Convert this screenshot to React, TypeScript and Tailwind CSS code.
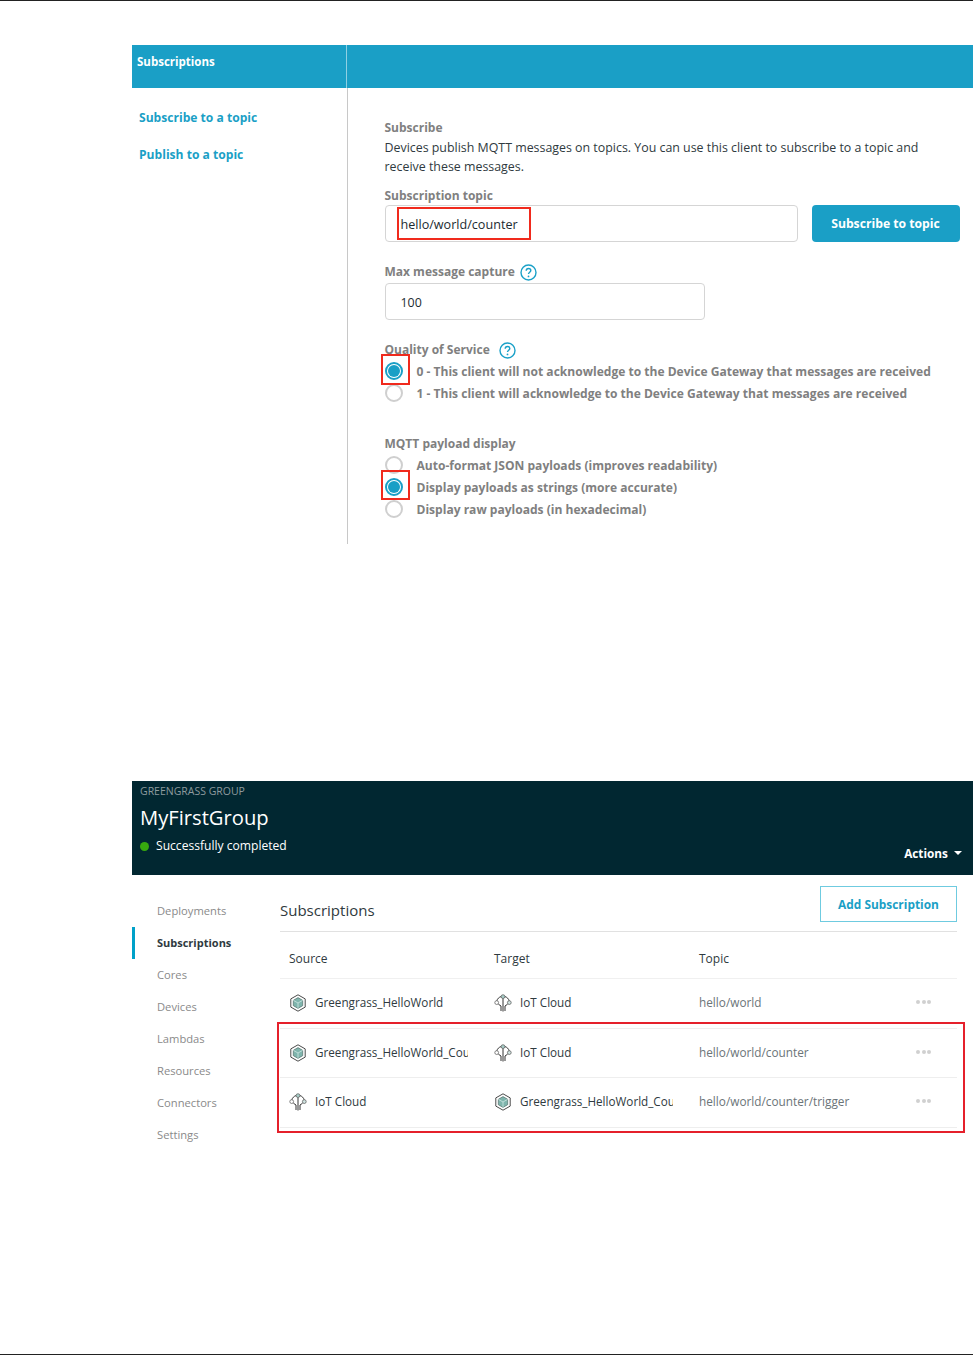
const font = { fontFamily: '"Open Sans", "Noto Sans", sans-serif' };

function HelpIcon() {
  return (
    <svg width="17" height="17" viewBox="0 0 17 17" className="shrink-0 text-[#1ba1c8]">
      <circle cx="8.5" cy="8.5" r="7.5" fill="none" stroke="currentColor" strokeWidth="1.4" />
      <path d="M6.2 6.7c0-1.4 1-2.2 2.3-2.2s2.3.8 2.3 2c0 1.8-2.3 1.8-2.3 3.6" fill="none" stroke="currentColor" strokeWidth="1.4" />
      <circle cx="8.5" cy="12.4" r="0.9" fill="currentColor" />
    </svg>
  );
}

function Radio({ checked, label }: { checked?: boolean; label: string }) {
  return (
    <div className="flex h-[22px] items-center">
      <span className={`-mt-[1px] flex h-[18px] w-[18px] shrink-0 items-center justify-center rounded-full border-2 bg-white ${checked ? 'border-[#1a9fc6]' : 'border-[#cfcfcf]'}`}>
        {checked && <span className="h-3 w-3 rounded-full bg-[#1a9fc6]" />}
      </span>
      <span className="ml-[14px] whitespace-nowrap pt-[2px] text-[12.05px] font-bold text-[#808080]">{label}</span>
    </div>
  );
}

function CoreIcon() {
  return (
    <svg width="18" height="18" viewBox="0 0 18 18" className="shrink-0">
      <path d="M9 .8l7.2 4.1v8.2L9 17.2l-7.2-4.1V4.9z" fill="#fff" stroke="#4a4a4a" strokeWidth="1" />
      <path d="M9 3.6l4.7 2.7v5.4L9 14.4l-4.7-2.7V6.3z" fill="#7fb5ad" stroke="#55706c" strokeWidth="0.7" />
      <path d="M4.3 6.3L9 9l4.7-2.7M9 9v5.4" fill="none" stroke="#d9ece9" strokeWidth="0.7" />
    </svg>
  );
}

function CloudIcon() {
  return (
    <svg width="18" height="18" viewBox="0 0 18 18" className="shrink-0">
      <path d="M7 2.6C5 3.2 3.4 4.8 2.8 6.8M11 2.6c2 .6 3.6 2.2 4.2 4.2" fill="none" stroke="#333" strokeWidth="1" />
      <path d="M7 17v-5L4.4 10.2M9 17.5V4.4M11 17v-5l2.6-1.8" fill="none" stroke="#333" strokeWidth="1" />
      <circle cx="9" cy="2.6" r="1.9" fill="#a9cfc9" stroke="#555" strokeWidth="0.7" />
      <circle cx="2.7" cy="8.6" r="1.9" fill="#fff" stroke="#555" strokeWidth="0.7" />
      <circle cx="15.3" cy="8.6" r="1.9" fill="#cfe3e0" stroke="#555" strokeWidth="0.7" />
    </svg>
  );
}

function Endpoint({ kind, name }: { kind: 'core' | 'cloud'; name: string }) {
  return (
    <div className="flex w-[205px] items-center pl-[9px]">
      {kind === 'core' ? <CoreIcon /> : <CloudIcon />}
      <span className="ml-[8px] w-[153px] overflow-hidden whitespace-nowrap text-[11.7px] text-[#2f3a40]">{name}</span>
    </div>
  );
}

function Row({ source, target, topic }: { source: ['core' | 'cloud', string]; target: ['core' | 'cloud', string]; topic: string }) {
  return (
    <div className="flex h-[49.5px] items-center border-b border-[#eeeeee]">
      <Endpoint kind={source[0]} name={source[1]} />
      <Endpoint kind={target[0]} name={target[1]} />
      <span className="ml-[9px] w-[217px] text-[11.8px] text-[#6b7478]">{topic}</span>
      <span className="-mt-[2px] flex gap-[1.5px]">
        <i className="h-1 w-1 rounded-full bg-[#d0d0d0]" />
        <i className="h-1 w-1 rounded-full bg-[#d0d0d0]" />
        <i className="h-1 w-1 rounded-full bg-[#d0d0d0]" />
      </span>
    </div>
  );
}

const groupNav = ['Deployments', 'Subscriptions', 'Cores', 'Devices', 'Lambdas', 'Resources', 'Connectors', 'Settings'];

export default function App() {
  return (
    <div style={font} className="flex h-[1355px] flex-col border-y border-[#222] bg-white pl-[132px]">
      {/* MQTT client panel */}
      <div className="mt-[44px] flex h-[43px] bg-[#1a9fc6]">
        <div className="w-[215px] border-r border-[#8fd0e3] pl-[5px] pt-[8px] text-[11.5px] font-bold text-white">Subscriptions</div>
      </div>
      <div className="flex h-[456px]">
        <div className="w-[216px] border-r border-[#c8c8c8] pl-[7px] pt-[20px] text-[12.1px] font-bold text-[#1a9fc6]">
          <p className="leading-5">Subscribe to a topic</p>
          <p className="mt-[17px] leading-5">Publish to a topic</p>
        </div>
        <div className="pl-[36.5px] pt-[31px] text-[12.4px]">
          <p className="h-[18px] text-[12px] font-bold leading-[18px] text-[#808080]">Subscribe</p>
          <p className="mt-[1px] w-[560px] leading-[19px] text-[#2f3a40]">
            Devices publish MQTT messages on topics. You can use this client to subscribe to a topic and receive these messages.
          </p>
          <p className="mt-[11px] text-[12px] font-bold leading-[18px] text-[#808080]">Subscription topic</p>
          <div className="flex">
            <div className="relative flex h-[37px] w-[413px] items-center rounded border border-[#d5d5d5] pl-[15px] pt-[3px] text-[12.6px] text-[#1c2b31]">
              hello/world/counter
              <span className="absolute left-[11px] top-[1px] h-[33px] w-[134px] border-2 border-[#f02a1d]" />
            </div>
            <div className="ml-[14px] flex h-[37px] w-[148px] items-center justify-center rounded bg-[#1a9fc6] pt-[1px] text-[12.2px] font-bold text-white">
              Subscribe to topic
            </div>
          </div>
          <div className="mt-[20px] flex h-[20px] items-center gap-[5px] text-[12px] font-bold text-[#808080]">
            Max message capture <HelpIcon />
          </div>
          <div className="mt-[1px] flex h-[37px] w-[320px] items-center rounded border border-[#d5d5d5] pl-[15px] pt-[3px] text-[#1c2b31]">100</div>
          <div className="mt-[20px] flex h-[20px] items-center gap-[9px] text-[12px] font-bold text-[#808080]">
            Quality of Service <HelpIcon />
          </div>
          <div className="relative">
            <Radio checked label="0 - This client will not acknowledge to the Device Gateway that messages are received" />
            <Radio label="1 - This client will acknowledge to the Device Gateway that messages are received" />
            <span className="absolute -left-[4px] -top-[6px] h-[31px] w-[29px] border-2 border-[#f02a1d]" />
          </div>
          <p className="mt-[30px] h-[20px] text-[12px] font-bold leading-[20px] text-[#808080]">MQTT payload display</p>
          <div className="relative">
            <Radio label="Auto-format JSON payloads (improves readability)" />
            <Radio checked label="Display payloads as strings (more accurate)" />
            <Radio label="Display raw payloads (in hexadecimal)" />
            <span className="absolute -left-[4px] top-[16px] h-[30px] w-[29px] border-2 border-[#f02a1d]" />
          </div>
        </div>
      </div>

      {/* Greengrass group panel */}
      <div className="mt-[237px] flex h-[94px] items-end justify-between bg-[#012731] pb-[13px] pl-[8px] pr-[11px]">
        <div className="self-start">
          <p className="mt-[3px] text-[10.5px] leading-[14px] text-[#8d9a9e]">GREENGRASS GROUP</p>
          <p className="mt-[4px] text-[20.2px] leading-[30px] text-white">MyFirstGroup</p>
          <div className="mt-[5px] flex items-center text-[12.1px] leading-[18px] text-white">
            <span className="mr-[7px] h-[9px] w-[9px] rounded-full bg-[#37a80f]" />
            Successfully completed
          </div>
        </div>
        <div className="flex items-center gap-[6px] text-[11.8px] font-bold leading-[18px] text-white">
          Actions
          <span className="h-0 w-0 border-x-[4px] border-t-[4px] border-x-transparent border-t-white" />
        </div>
      </div>
      <div className="flex">
        <nav className="w-[148px] pt-[20px] text-[11.2px] text-[#8a8a8a]">
          {groupNav.map((item) => (
            <div key={item} className={`flex h-[32px] items-center pl-[25px] ${item === 'Subscriptions' ? 'border-l-[3px] border-[#00a1c9] !pl-[22px] !text-[11px] font-bold text-[#2f3a40]' : ''}`}>
              {item}
            </div>
          ))}
        </nav>
        <div className="relative w-[677px] pt-[11px]">
          <div className="flex h-[46px] items-start justify-between border-b border-[#e1e1e1]">
            <span className="pt-[13px] text-[15px] leading-[22px] text-[#2f3a40]">Subscriptions</span>
            <span className="flex h-[36px] w-[137px] items-center justify-center border border-[#6fcbe0] pt-[1px] text-[11.9px] font-bold text-[#1a9fc6]">
              Add Subscription
            </span>
          </div>
          <div className="flex h-[47px] items-center border-b border-[#f0f0f0] pt-[8px] text-[12px] text-[#2f3a40]">
            <span className="w-[205px] pl-[9px]">Source</span>
            <span className="w-[205px] pl-[9px]">Target</span>
            <span className="pl-[9px]">Topic</span>
          </div>
          <Row source={['core', 'Greengrass_HelloWorld']} target={['cloud', 'IoT Cloud']} topic="hello/world" />
          <Row source={['core', 'Greengrass_HelloWorld_Counter']} target={['cloud', 'IoT Cloud']} topic="hello/world/counter" />
          <Row source={['cloud', 'IoT Cloud']} target={['core', 'Greengrass_HelloWorld_Counter']} topic="hello/world/counter/trigger" />
          <span className="absolute -left-[3px] right-[-8px] top-[147px] h-[111px] border-2 border-[#e5202b]" />
        </div>
      </div>
    </div>
  );
}
